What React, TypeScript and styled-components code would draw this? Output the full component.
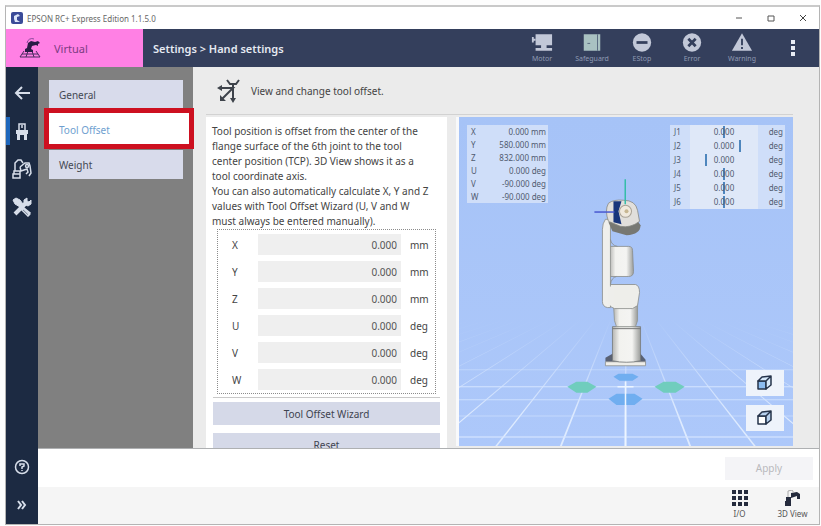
import React from 'react';
import styled, { createGlobalStyle } from 'styled-components';

const GlobalStyle = createGlobalStyle`
  *, *::before, *::after { box-sizing: border-box; }
  body { margin: 0; background: #fdfdfd; }
  body, button, input { font-family: 'Noto Sans', 'Open Sans', sans-serif; }
  button { border: 0; padding: 0; margin: 0; background: none; color: inherit; cursor: pointer; }
  svg { display: block; flex: none; }
`;

const Window = styled.div`
  display: flex;
  flex-direction: column;
  height: calc(100vh - 6px);
  margin: 5px 1px 1px 5px;
  border: 1px solid #b4b4b4;
  border-top: 2px solid #c9c9c9;
  background: #fff;
  color: #444;
  font-size: 10px;
  overflow: hidden;
`;

const TitleBar = styled.div`
  display: flex;
  align-items: center;
  gap: 4px;
  height: 22px;
  flex: none;
  padding-left: 5px;
  font-size: 8px;
  color: #666;
`;

const WindowButtons = styled.div`
  display: flex;
  margin-left: auto;
`;

const WindowButton = styled.button`
  display: grid;
  place-items: center;
  width: 32px;
  height: 20px;
`;

const Header = styled.header`
  display: flex;
  height: 38px;
  flex: none;
  background: #343f5c;
  color: #e6eaf2;
`;

const ModeTag = styled.div`
  display: flex;
  align-items: center;
  gap: 12px;
  width: 137px;
  padding-left: 12px;
  background: #ff80e4;
  color: #7c3c82;
  font-size: 11px;
`;

const Crumb = styled.div`
  display: flex;
  align-items: center;
  padding-left: 10px;
  font-size: 11px;
  font-weight: 600;
`;

const StatusBar = styled.div`
  display: flex;
  margin-left: auto;
`;

const Status = styled.div`
  display: flex;
  flex-direction: column;
  align-items: center;
  gap: 2px;
  width: 50px;
  padding-top: 4px;
  font-size: 7px;
  line-height: 10px;
  color: #8f9ab3;
`;

const MoreButton = styled.button`
  display: grid;
  place-items: center;
  width: 52px;
  height: 38px;
`;

const Body = styled.div`
  display: flex;
  flex: 1;
  min-height: 0;
`;

const Rail = styled.nav`
  display: flex;
  flex-direction: column;
  width: 32px;
  flex: none;
  padding-top: 7px;
  background: #1c2a42;
  color: #d7deea;
`;

const RailButton = styled.button<{ $active?: boolean }>`
  display: grid;
  place-items: center;
  width: 100%;
  height: 38px;
  background: linear-gradient(#1d66bb, #1d66bb) left center / ${p => (p.$active ? '4px 28px' : '0 0')} no-repeat;
`;

const RailEnd = styled.div`
  margin-top: auto;
`;

const Column = styled.div`
  display: flex;
  flex-direction: column;
  flex: 1;
  min-width: 0;
`;

const Work = styled.div`
  display: flex;
  flex: 1;
  min-height: 0;
  background: #ebebeb;
  border-bottom: 1px solid #aeb0b2;
`;

const Menu = styled.div`
  display: flex;
  flex-direction: column;
  gap: 6px;
  width: 155px;
  flex: none;
  padding: 13px 10px 0 11px;
  background: #808080;
`;

const MenuSlot = styled.div`
  position: relative;
`;

const MenuButton = styled.button<{ $selected?: boolean }>`
  width: 100%;
  height: 29px;
  padding-left: 10px;
  text-align: left;
  font-size: 10px;
  background: ${p => (p.$selected ? '#fff' : '#d8dbeb')};
  color: ${p => (p.$selected ? '#6f9fd0' : '#444953')};
`;

const Highlight = styled.div`
  position: absolute;
  inset: -7px -11px -5px -5px;
  border: 5px solid #cd1020;
  box-shadow: inset -7px 0 #fff, inset 0 2px #fff;
  pointer-events: none;
`;

const Content = styled.main`
  display: flex;
  flex-direction: column;
  flex: 1;
  min-width: 0;
  padding: 0 26px 0 13px;
`;

const PageTitle = styled.div`
  display: flex;
  align-items: center;
  gap: 10px;
  height: 48px;
  flex: none;
  padding-left: 11px;
  border-bottom: 1px solid #d2d2d2;
`;

const Panels = styled.div`
  display: flex;
  flex: 1;
  min-height: 0;
  gap: 9px;
  padding-top: 2px;
`;

const Form = styled.section`
  width: 241px;
  flex: none;
  padding: 7px 7px 0;
  background: #fff;
  overflow: hidden;
`;

const Description = styled.p`
  margin: 0 -7px 0 -1px;
  line-height: 15px;
`;

const Fields = styled.div`
  display: grid;
  gap: 7px;
  margin: 0 4px 3px;
  padding: 4px;
  border: 1px dotted #8c8c8c;
`;

const Field = styled.label`
  display: grid;
  grid-template-columns: 36px 1fr 30px;
  align-items: center;
  height: 20px;
`;

const FieldName = styled.span`
  padding-left: 10px;
`;

const FieldUnit = styled.span`
  padding-left: 9px;
`;

const FieldInput = styled.input`
  width: 100%;
  height: 21px;
  padding: 0 4px;
  border: 0;
  background: #efefef;
  color: #555;
  font-size: 10px;
  text-align: right;
`;

const Actions = styled.div`
  display: grid;
  gap: 8px;
  padding-top: 4px;
  border-top: 1px solid #c9c9c9;
`;

const Action = styled.button`
  height: 23px;
  background: #d5d9e8;
  color: #3f4450;
  font-size: 10px;
`;

const Viewer = styled.section`
  position: relative;
  flex: 1;
  min-width: 0;
  margin-bottom: 2px;
  border-left: 3px solid #f8f9fb;
  background: #acc7f9;
  overflow: hidden;
`;

const Scene = styled.svg`
  width: 100%;
  height: 100%;
`;

const Readout = styled.table<{ $side: 'left' | 'right' }>`
  position: absolute;
  top: 8px;
  ${p => p.$side}: 8px;
  width: ${p => (p.$side === 'left' ? 81 : 115)}px;
  border-collapse: collapse;
  background: #cfdef9;
  color: #4f5b70;
  font-size: 8px;
  line-height: ${p => (p.$side === 'left' ? 13 : 14)}px;

  th { width: 20px; font-weight: 400; text-align: left; padding: 0 0 0 4px; }
  td { padding: 0 2px 0 0; text-align: right; white-space: nowrap; }
`;

const JointValue = styled.div<{ $mark: number }>`
  width: 68px;
  text-align: center;
  background:
    linear-gradient(#4e86bd, #4e86bd) ${p => p.$mark}% 50% / 2px 12px no-repeat,
    #dfe8f8;
`;

const ViewButtons = styled.div`
  position: absolute;
  right: 9px;
  bottom: 15px;
  display: grid;
  gap: 9px;
`;

const ViewButton = styled.button`
  display: grid;
  place-items: center;
  width: 38px;
  height: 26px;
  background: #eef3fb;
`;

const ApplyBar = styled.div`
  display: flex;
  align-items: center;
  justify-content: flex-end;
  height: 38px;
  flex: none;
  padding-right: 6px;
  background: #fff;
`;

const ApplyButton = styled.button`
  width: 88px;
  height: 23px;
  background: #f4f4f7;
  color: #b9b9bd;
  font-size: 10px;
`;

const Footer = styled.footer`
  display: flex;
  justify-content: flex-end;
  height: 37px;
  flex: none;
  background: #f5f5f5;
`;

const FooterButton = styled.button`
  display: flex;
  flex-direction: column;
  align-items: center;
  gap: 2px;
  width: 53px;
  padding-top: 3px;
  font-size: 8px;
  line-height: 11px;
  color: #555;
`;

const Robot = () => (
  <svg width="24" height="22" viewBox="0 0 24 22" fill="none">
    <path d="M6 14 2 20h20l-4-6M4 17h16M10 14 8 20M14 14l2 6" stroke="#4a2a60" strokeWidth="1" />
    <path d="M7 15v-3l2-1 1-5 3-2 4 1 3-1 2 2-2 1v2l-2-1-4 1-1 3 2 1v2z" fill="#2a1c46" />
    <path d="M9 6a5 5 0 0 1 7-4" stroke="#8a479a" />
  </svg>
);

const statusIcons = [
  {
    label: 'Motor',
    icon: <g><path d="M5 1h18v12H5zM11 13h6v3h-6zM5 16h18v3H5z" fill="#c2c8d8" /><path d="M2 4v6M2 7h3" stroke="#c2c8d8" strokeWidth="2" /></g>,
  },
  {
    label: 'Safeguard',
    icon: <g><path d="M3 1h18v18H3z" fill="#a9c2c2" /><path d="M18 1v18M7 11h3" stroke="#53657c" strokeWidth="1" /></g>,
  },
  {
    label: 'EStop',
    icon: <g><circle cx="12" cy="10" r="10" fill="#c2c8d8" /><path d="M6 10h12" stroke="#343f5c" strokeWidth="3" /></g>,
  },
  {
    label: 'Error',
    icon: <g><circle cx="12" cy="10" r="10" fill="#c2c8d8" /><path d="m8 6 8 8m0-8-8 8" stroke="#343f5c" strokeWidth="3" /></g>,
  },
  {
    label: 'Warning',
    icon: <g><path d="m12 0 11 19H1z" fill="#c2c8d8" /><path d="M12 6v7m0 2v2" stroke="#343f5c" strokeWidth="2" /></g>,
  },
];

const offsets = [['X', 'mm'], ['Y', 'mm'], ['Z', 'mm'], ['U', 'deg'], ['V', 'deg'], ['W', 'deg']];
const pose = [
  ['X', '0.000 mm'], ['Y', '580.000 mm'], ['Z', '832.000 mm'],
  ['U', '0.000 deg'], ['V', '-90.000 deg'], ['W', '-90.000 deg'],
];
const joints = [['J1', 50], ['J2', 74], ['J3', 22], ['J4', 50], ['J5', 50], ['J6', 50]] as const;
const floorLines = Array.from({ length: 21 }, (_, i) => i - 10);

const Cube = ({ filled }: { filled?: boolean }) => (
  <svg width="18" height="18" viewBox="0 0 18 18" fill="none" stroke="#26344b" strokeWidth="1.500" strokeLinejoin="round">
    <path d="M2 7h8v8H2z" fill={filled ? '#8bbcf0' : '#fff'} />
    <path d="m2 7 4-4 9-1-5 5zM10 7l5-5v9l-5 4z" fill={filled ? '#d7e9fa' : '#b7d1ee'} />
  </svg>
);

const RobotScene = () => (
  <Scene viewBox="0 0 333 328" preserveAspectRatio="xMidYMid slice" role="img" aria-label="3D view of the robot">
    <defs>
      <linearGradient id="sky" x1="0" y1="0" x2="0" y2="1">
        <stop offset="0" stopColor="#a6c3f7" />
        <stop offset="1" stopColor="#adc8fa" />
      </linearGradient>
      <linearGradient id="fade" x1="0" y1="200" x2="0" y2="300" gradientUnits="userSpaceOnUse">
        <stop offset="0" stopColor="#e4efff" stopOpacity="0" />
        <stop offset="1" stopColor="#e4efff" stopOpacity="0.900" />
      </linearGradient>
      <linearGradient id="body" x1="0" y1="0" x2="1" y2="0">
        <stop offset="0" stopColor="#b5b5b2" />
        <stop offset="0.250" stopColor="#f2f2ef" />
        <stop offset="0.700" stopColor="#f4f4f2" />
        <stop offset="1" stopColor="#999b99" />
      </linearGradient>
    </defs>
    <path d="M-60 0h460v330H-60z" fill="url(#sky)" />
    <g fill="url(#fade)">
      {floorLines.map(k => (
        <path key={k} d={`M${166 + k * 15} 202h.8L${167 + k * 66} 332h-2z`} />
      ))}
    </g>
    <g stroke="#d5e5ff" fill="none">
      <path d="M-60 252h460" opacity=".5" />
      <path d="M-60 269h460" />
      <path d="M-60 282h460" opacity=".8" />
      <path d="M-60 298h460" opacity=".6" />
      <path d="M-60 319h460" strokeWidth="2" opacity=".6" />
    </g>
    <path d="m108 269 9-5h11l9 5-9 6h-11zM195 269l9-5h12l9 5-9 6h-12z" fill="#70cdbd" />
    <path d="m154 259 5-3h14l6 3-6 4h-13zM149 281l8-5h18l8 5-8 6h-18z" fill="#70aef0" />
    <path d="M166 264v64M158 269h16" stroke="#edf5ff" strokeWidth="1.500" />
    <path d="M146 244v-4l7-4h28l5 6v4z" fill="#596174" />
    <path d="M146 244h40v4h-40z" fill="#efeee9" stroke="#8e918e" strokeWidth="0.800" />
    <path d="M153 209h28v34q-14 3-28 0z" fill="url(#body)" stroke="#777b7a" strokeWidth="0.800" />
    <path d="M153 211h28" stroke="#777" />
    <path d="M154 186h24v17l-2 6h-19l-2-6z" fill="url(#body)" stroke="#90938f" strokeWidth="0.800" />
    <path d="M149 167h27q4 1 4 8l-2 13-5 3h-18l-6-3z" fill="#eeeeea" stroke="#898c89" strokeWidth="0.800" />
    <path d="M150 129h19q4 0 4 4l1 21q0 5-5 5h-19z" fill="url(#body)" stroke="#898c89" strokeWidth="0.800" />
    <path d="M146 102q-3 4-3 10v72q0 5 5 6h3V102z" fill="#efefec" stroke="#898c89" strokeWidth="0.800" />
    <path d="M148 169h6v19h-6z" fill="#eeeeeb" />
    <path d="M151 122q1 6 7 7M151 167q1-7 6-8" stroke="#8b8f8d" strokeWidth="0.800" fill="none" />
    <path d="m149 105 4 9 14 4q14-1 14-10l-4-6z" fill="#777873" />
    <path d="M149 86q5-4 15-3 12 0 14 10l2 11q-9 7-19 5l-12-5q-4-11 0-18z" fill="#e1dfdb" stroke="#888984" strokeWidth="0.800" />
    <path d="M154 84h8l-3 10 3 13-8-2z" fill="#18357b" />
    <circle cx="166" cy="94" r="6" fill="#f0e9dd" stroke="#aaa397" />
    <circle cx="167" cy="94" r="2" fill="#c7b792" />
    <path d="M165 62h1.500v25H165z" fill="#35bda9" />
    <path d="M135 94h20v1.500h-20z" fill="#4858d0" />
  </Scene>
);

export default function App() {
  return (
    <Window>
      <GlobalStyle />
      <TitleBar>
        <svg width="12" height="12" viewBox="0 0 12 12">
          <rect width="12" height="12" rx="2" fill="#3b4b99" />
          <path d="M3 7V4l4-2 2 2-3 1v3l3 2H4z" fill="#dde6fa" />
        </svg>
        EPSON RC+ Express Edition 1.1.5.0
        <WindowButtons>
          <WindowButton aria-label="Minimize"><svg width="8" height="8"><path d="M1 4h6" stroke="#555" /></svg></WindowButton>
          <WindowButton aria-label="Maximize"><svg width="8" height="8"><path d="M1 2h6v5H1z" stroke="#555" fill="none" /></svg></WindowButton>
          <WindowButton aria-label="Close"><svg width="8" height="8"><path d="m1 1 6 6m0-6-6 6" stroke="#444" /></svg></WindowButton>
        </WindowButtons>
      </TitleBar>
      <Header>
        <ModeTag><Robot />Virtual</ModeTag>
        <Crumb>Settings &gt; Hand settings</Crumb>
        <StatusBar>
          {statusIcons.map(s => (
            <Status key={s.label}>
              <svg width="22" height="19" viewBox="0 0 24 20">{s.icon}</svg>
              {s.label}
            </Status>
          ))}
          <MoreButton aria-label="More">
            <svg width="4" height="18" fill="#e9edf5"><path d="M0 1h4v4H0zM0 7h4v4H0zM0 13h4v4H0z" /></svg>
          </MoreButton>
        </StatusBar>
      </Header>
      <Body>
        <Rail>
          <RailButton aria-label="Back">
            <svg width="16" height="16" fill="none" stroke="currentColor" strokeWidth="2"><path d="M16 8H2m6-6L2 8l6 6" /></svg>
          </RailButton>
          <RailButton $active aria-label="Hand">
            <svg width="14" height="18" viewBox="0 0 14 18" fill="none" stroke="currentColor" strokeWidth="1.500">
              <path d="M4 8V2h6v6M7 3v3" />
              <path d="M1 8h12v4h-1v6H9v-5H5v5H2v-6H1z" fill="currentColor" stroke="none" />
            </svg>
          </RailButton>
          <RailButton aria-label="Robot">
            <svg width="20" height="20" viewBox="0 0 20 20" fill="none" stroke="currentColor" strokeWidth="1.500">
              <path d="M2 12h6v3H2zM1 15h7v4H1zM3 12V4l3-3h3l2 3M8 8l5-4h4l1 3 1 7-2 3M8 8l1 4 6-2 1 3-2 2" />
              <circle cx="15" cy="7" r="1.500" />
            </svg>
          </RailButton>
          <RailButton aria-label="Tools">
            <svg width="20" height="20" viewBox="0 0 20 20" fill="none" stroke="currentColor">
              <path d="m1 3 3-2 4 2 3 4-3 3-5-3z" fill="currentColor" />
              <path d="m8 8 10 10" strokeWidth="2" />
              <path d="m12 11 6 5-2 3-6-6z" strokeWidth="1.500" />
              <path d="m14 6-11 11" strokeWidth="4" />
              <path d="M12 7V3l3-2v3l2 1 2-2v4l-3 2z" fill="currentColor" />
            </svg>
          </RailButton>
          <RailEnd>
            <RailButton aria-label="Help">
              <svg width="16" height="16" fill="none" stroke="currentColor" strokeWidth="1.500">
                <circle cx="8" cy="8" r="6.500" /><path d="M6 7V5h4v2L8 8v2m0 1v1" />
              </svg>
            </RailButton>
            <RailButton aria-label="Expand">
              <svg width="10" height="10" fill="none" stroke="currentColor" strokeWidth="2"><path d="m1 1 3 4-3 4m4-8 3 4-3 4" /></svg>
            </RailButton>
          </RailEnd>
        </Rail>
        <Column>
          <Work>
            <Menu>
              <MenuButton>General</MenuButton>
              <MenuSlot>
                <MenuButton $selected>Tool Offset</MenuButton>
                <Highlight />
              </MenuSlot>
              <MenuButton>Weight</MenuButton>
            </Menu>
            <Content>
              <PageTitle>
                <svg width="24" height="26" viewBox="0 0 24 26" fill="none" stroke="#3e434b" strokeWidth="2">
                  <path d="m10 2 3 4h6l3-4M16 6v15M3 10h13L5 21" />
                  <path d="m5 7-5 3 5 3zM13 20l3 5 3-5zM3 17v6h6z" fill="#3e434b" stroke="none" />
                </svg>
                View and change tool offset.
              </PageTitle>
              <Panels>
                <Form>
                  <Description>
                    Tool position is offset from the center of the<br />
                    flange surface of the 6th joint to the tool<br />
                    center position (TCP). 3D View shows it as a<br />
                    tool coordinate axis.<br />
                    You can also automatically calculate X, Y and Z<br />
                    values with Tool Offset Wizard (U, V and W<br />
                    must always be entered manually).
                  </Description>
                  <Fields>
                    {offsets.map(([name, unit]) => (
                      <Field key={name}>
                        <FieldName>{name}</FieldName>
                        <FieldInput defaultValue="0.000" />
                        <FieldUnit>{unit}</FieldUnit>
                      </Field>
                    ))}
                  </Fields>
                  <Actions>
                    <Action>Tool Offset Wizard</Action>
                    <Action>Reset</Action>
                  </Actions>
                </Form>
                <Viewer>
                  <RobotScene />
                  <Readout $side="left">
                    <tbody>
                      {pose.map(([axis, value]) => (
                        <tr key={axis}><th scope="row">{axis}</th><td>{value}</td></tr>
                      ))}
                    </tbody>
                  </Readout>
                  <Readout $side="right">
                    <tbody>
                      {joints.map(([name, mark]) => (
                        <tr key={name}>
                          <th scope="row">{name}</th>
                          <td><JointValue $mark={mark}>0.000</JointValue></td>
                          <td>deg</td>
                        </tr>
                      ))}
                    </tbody>
                  </Readout>
                  <ViewButtons>
                    <ViewButton aria-label="Solid view"><Cube filled /></ViewButton>
                    <ViewButton aria-label="Outline view"><Cube /></ViewButton>
                  </ViewButtons>
                </Viewer>
              </Panels>
            </Content>
          </Work>
          <ApplyBar><ApplyButton disabled>Apply</ApplyButton></ApplyBar>
          <Footer>
            <FooterButton>
              <svg width="16" height="16" fill="#252b3d">
                <path d="M0 0h4v4H0zM6 0h4v4H6zM12 0h4v4h-4zM0 6h4v4H0zM6 6h4v4H6zM12 6h4v4h-4zM0 12h4v4H0zM6 12h4v4H6zM12 12h4v4h-4z" />
              </svg>
              I/O
            </FooterButton>
            <FooterButton>
              <svg width="16" height="16" viewBox="0 0 16 16" fill="#252b3d">
                <path d="M0 11h6v5H0zM1 7h5v4H1zM6 3l6-1 3 2v5h-3V6L6 8z" />
                <path d="M3 7V1l4-1 2 3" fill="none" stroke="#aaa" />
              </svg>
              3D View
            </FooterButton>
          </Footer>
        </Column>
      </Body>
    </Window>
  );
}
